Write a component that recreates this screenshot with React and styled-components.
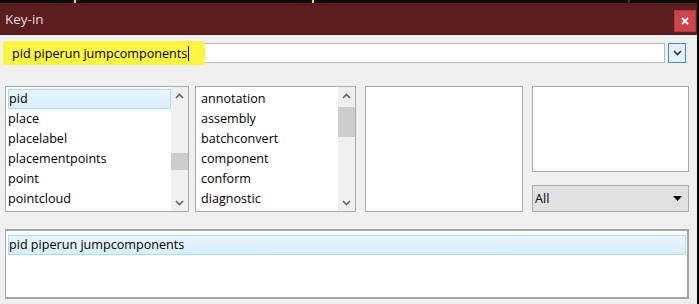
import React from 'react';
import styled, { createGlobalStyle } from 'styled-components';

const GlobalStyle = createGlobalStyle`
  html, body {
    margin: 0;
    padding: 0;
    background: #000;
  }
  * {
    box-sizing: border-box;
  }
`;

const Window = styled.div`
  width: 699px;
  height: 304px;
  overflow: hidden;
  display: flex;
  flex-direction: column;
  border-right: 2px solid #000;
  font-family: 'Open Sans', 'Noto Sans', sans-serif;
  color: #000;
`;

const TopStrip = styled.div`
  height: 3px;
  flex: none;
  background: linear-gradient(
    to right,
    #0a0a0a 74px,
    #f4e000 74px 76px,
    #0a0a0a 76px 312px,
    #f4e000 312px 314px,
    #0a0a0a 314px 628px,
    #3a3a3a 628px 630px,
    #0a0a0a 630px
  );
`;

const TitleBar = styled.div`
  height: 32px;
  flex: none;
  background: #5b1d1f;
  display: flex;
  align-items: flex-end;
  justify-content: space-between;
  padding: 0 1px 3px 5px;
`;

const Title = styled.span`
  align-self: center;
  margin-top: 2px;
  font-size: 13.5px;
  color: #eadede;
`;

const CloseButton = styled.div`
  width: 22px;
  height: 22px;
  background: #c9464a;
  border: 1px solid #b33a3d;
  display: flex;
  align-items: center;
  justify-content: center;
`;

const Body = styled.div`
  flex: 1;
  background: #f0f0f0;
  padding: 8px 8px 0 5px;
  display: flex;
  flex-direction: column;
`;

const InputRow = styled.div`
  display: flex;
  gap: 3px;
  height: 20px;
`;

const TextInput = styled.div`
  width: 660px;
  height: 20px;
  background: #fff;
  border: 1px solid #b9b9b9;
  display: flex;
  align-items: center;
`;

const Highlight = styled.span`
  display: flex;
  align-items: center;
  height: 24px;
  width: 202px;
  margin-left: -3px;
  padding-left: 9px;
  background: #fcf642;
  border-radius: 3px;
  font-size: 12.6px;
  white-space: nowrap;
`;

const Caret = styled.span`
  width: 1px;
  height: 15px;
  background: #000;
  margin-left: 1px;
`;

const DropButton = styled.div`
  width: 18px;
  height: 20px;
  background: #e5f1fb;
  border: 1px solid #3c8cdb;
  display: flex;
  align-items: center;
  justify-content: center;
`;

const ListsRow = styled.div`
  display: flex;
  margin-top: 23px;
  height: 126px;
`;

const ListBox = styled.div`
  width: ${({ $w }) => $w}px;
  height: ${({ $h }) => $h || 126}px;
  margin-right: ${({ $gap }) => $gap || 0}px;
  background: #fff;
  border: 1px solid #a7a9ad;
  display: flex;
  overflow: hidden;
`;

const Items = styled.div`
  flex: 1;
  padding: 2px 0 0 ${({ $indent }) => $indent || 2}px;
  overflow: hidden;
`;

const Item = styled.div`
  height: 20px;
  line-height: 19px;
  font-size: 12.6px;
  white-space: nowrap;
  ${({ $selected }) =>
    $selected &&
    `
    background: linear-gradient(#eaf6fd, #d9eefb);
    border: 1px solid #a9def6;
    line-height: 17px;
  `}
`;

const ScrollTrack = styled.div`
  width: 17px;
  background: #f0f0f0;
  display: flex;
  flex-direction: column;
  align-items: center;
`;

const ScrollArrow = styled.div`
  height: 17px;
  width: 17px;
  display: flex;
  align-items: center;
  justify-content: center;
  flex: none;
`;

const ScrollMid = styled.div`
  flex: 1;
  width: 100%;
  display: flex;
  flex-direction: column;
  padding-top: ${({ $top }) => $top}px;
`;

const ScrollThumb = styled.div`
  width: 17px;
  height: ${({ $h }) => $h}px;
  background: #cdcdcd;
`;

const RightColumn = styled.div`
  width: 157px;
  display: flex;
  flex-direction: column;
  justify-content: space-between;
`;

const Combo = styled.div`
  height: 27px;
  background: #e1e1e1;
  border: 1px solid #adadad;
  display: flex;
  align-items: center;
  justify-content: space-between;
  padding: 0 6px 0 2px;
  font-size: 12.6px;
`;

const HistoryBox = styled.div`
  margin-top: 17px;
  width: 684px;
  height: 70px;
  background: #fff;
  border: 1px solid #a5a5a5;
  border-width: 2px 2px 2px 1px;
  padding: 4px 1px 0 2px;
`;

const Chevron = ({ up, color = '#555' }) => (
  <svg width="9" height="6" viewBox="0 0 9 6">
    <path
      d={up ? 'M1 5 L4.5 1.5 L8 5' : 'M1 1 L4.5 4.5 L8 1'}
      fill="none"
      stroke={color}
      strokeWidth="1.6"
    />
  </svg>
);

const ScrollBar = ({ thumbTop, thumbHeight }) => (
  <ScrollTrack>
    <ScrollArrow>
      <Chevron up color="#606060" />
    </ScrollArrow>
    <ScrollMid $top={thumbTop}>
      <ScrollThumb $h={thumbHeight} />
    </ScrollMid>
    <ScrollArrow>
      <Chevron color="#606060" />
    </ScrollArrow>
  </ScrollTrack>
);

const commands = ['pid', 'place', 'placelabel', 'placementpoints', 'point', 'pointcloud'];
const subcommands = ['annotation', 'assembly', 'batchconvert', 'component', 'conform', 'diagnostic'];

const App = () => (
  <>
    <GlobalStyle />
    <Window>
      <TopStrip />
      <TitleBar>
        <Title>Key-in</Title>
        <CloseButton>
          <svg width="8" height="8" viewBox="0 0 8 8">
            <path d="M1 1 L7 7 M7 1 L1 7" stroke="#fff" strokeWidth="1.8" />
          </svg>
        </CloseButton>
      </TitleBar>
      <Body>
        <InputRow>
          <TextInput>
            <Highlight>
              pid piperun jumpcomponents
              <Caret />
            </Highlight>
          </TextInput>
          <DropButton>
            <Chevron color="#333" />
          </DropButton>
        </InputRow>

        <ListsRow>
          <ListBox $w={184} $gap={6}>
            <Items $indent={2}>
              {commands.map((c, i) => (
                <Item key={c} $selected={i === 0}>
                  {c}
                </Item>
              ))}
            </Items>
            <ScrollBar thumbTop={49} thumbHeight={17} />
          </ListBox>
          <ListBox $w={161} $gap={9}>
            <Items $indent={5}>
              {subcommands.map((c) => (
                <Item key={c}>{c}</Item>
              ))}
            </Items>
            <ScrollBar thumbTop={3} thumbHeight={30} />
          </ListBox>
          <ListBox $w={158} $gap={9} />
          <RightColumn>
            <ListBox $w={157} $h={86} />
            <Combo>
              <span>All</span>
              <svg width="9" height="5" viewBox="0 0 9 5">
                <path d="M0 0 H9 L4.5 5 Z" fill="#000" />
              </svg>
            </Combo>
          </RightColumn>
        </ListsRow>

        <HistoryBox>
          <Item $selected>pid piperun jumpcomponents</Item>
        </HistoryBox>
      </Body>
    </Window>
  </>
);

export default App;
